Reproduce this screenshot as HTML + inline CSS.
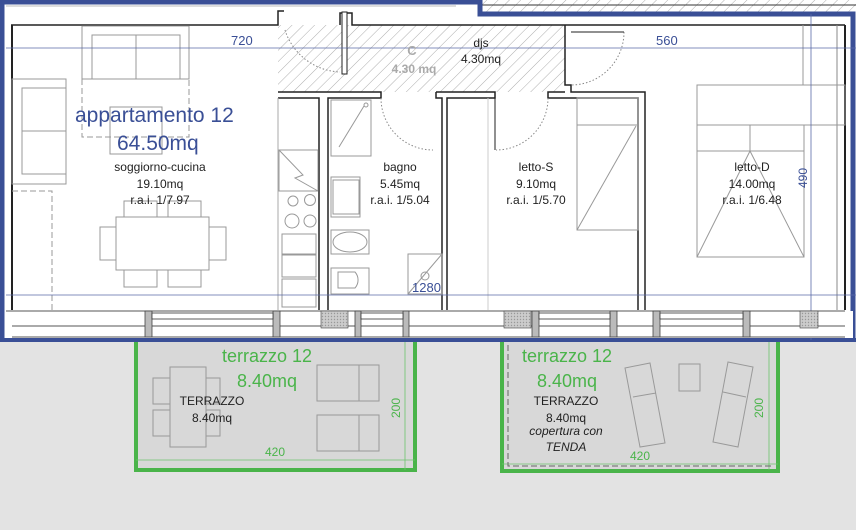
<!DOCTYPE html>
<html><head><meta charset="utf-8"><style>
html,body{margin:0;padding:0;background:#fff}
svg{display:block}
text{font-family:"Liberation Sans",sans-serif}
</style></head><body>
<svg width="856" height="530" viewBox="0 0 856 530" xmlns="http://www.w3.org/2000/svg">
<defs>
<pattern id="h" width="8" height="8" patternUnits="userSpaceOnUse" patternTransform="rotate(45)">
<line x1="0" y1="0" x2="0" y2="8" stroke="#999" stroke-width="0.8"/></pattern>
<pattern id="dots" width="3" height="3" patternUnits="userSpaceOnUse"><rect width="3" height="3" fill="#ccc"/><circle cx="1.5" cy="1.5" r="0.7" fill="#999"/></pattern>
</defs>
<rect width="856" height="530" fill="#fff"/>
<rect x="0" y="342" width="856" height="188" fill="#e3e3e3"/>
<rect x="482" y="0" width="374" height="12" fill="url(#h)"/>
<line x1="482" y1="5" x2="856" y2="5" stroke="#333" stroke-width="1"/>
<rect x="6" y="3" width="472" height="20" fill="#fff"/>
<line x1="6" y1="6" x2="456" y2="6" stroke="#bbb"/>
<rect x="278" y="25" width="287" height="67" fill="url(#h)"/>
<path d="M2 340 V2 H480 V14 H853 V340" fill="none" stroke="#3a4f96" stroke-width="5"/>
<line x1="0" y1="340" x2="856" y2="340" stroke="#3a4f96" stroke-width="4"/>
<path d="M11 25 H278 V11 H284 M340 25 V13 H352 V25 H478" fill="none" stroke="#222" stroke-width="1.5"/>
<path d="M478 25 H845" fill="none" stroke="#222" stroke-width="1.5"/>
<rect x="342" y="12" width="5" height="62" fill="#fff" stroke="#222"/>
<line x1="12" y1="25" x2="12" y2="310" stroke="#222" stroke-width="2"/>
<line x1="845" y1="25" x2="845" y2="310" stroke="#222" stroke-width="2"/>
<line x1="837" y1="25" x2="837" y2="310" stroke="#888" stroke-width="1"/>
<!-- interior walls -->
<path d="M278 92 H381 V98 H328 V310" fill="none" stroke="#222" stroke-width="1.5"/>
<path d="M278 98 H319 V310" fill="none" stroke="#222" stroke-width="1.5"/>
<path d="M436 92 V98 H442 V310 M447 310 V98 H495 V92 H436" fill="none" stroke="#222" stroke-width="1.5"/>
<path d="M565 25 V85 H571 V92 H645 V310 M638 310 V98 H548 V92 H565" fill="none" stroke="#222" stroke-width="1.5"/>
<line x1="278" y1="98" x2="278" y2="310" stroke="#aaa"/>
<path d="M285 30 A60 60 0 0 0 340 72" fill="none" stroke="#888" stroke-dasharray="1.5 2"/>
<path d="M381 98 A52 52 0 0 0 433 150" fill="none" stroke="#888" stroke-dasharray="1.5 2"/>
<path d="M548 98 A52 52 0 0 1 496 150" fill="none" stroke="#888" stroke-dasharray="1.5 2"/>
<path d="M624 32 A53 53 0 0 1 571 85" fill="none" stroke="#888" stroke-dasharray="1.5 2"/>
<line x1="495" y1="98" x2="495" y2="150" stroke="#222"/>
<line x1="571" y1="32" x2="624" y2="32" stroke="#222"/>
<g fill="none" stroke="#999" stroke-width="1">
<rect x="82" y="26" width="107" height="53"/><rect x="92" y="35" width="44" height="44"/><rect x="136" y="35" width="44" height="44"/>
<path d="M82 79 V137 H189 V79" stroke-dasharray="6 3"/>
<rect x="110" y="107" width="52" height="47"/>
<rect x="12" y="79" width="54" height="105"/><rect x="22" y="88" width="44" height="43"/><rect x="22" y="131" width="44" height="43"/>
<path d="M12 191 H52 V310" stroke-dasharray="6 3"/>
<rect x="116" y="217" width="93" height="53"/>
<rect x="124" y="201" width="33" height="16"/><rect x="168" y="201" width="33" height="16"/>
<rect x="124" y="270" width="33" height="17"/><rect x="168" y="270" width="33" height="17"/>
<rect x="100" y="227" width="16" height="33"/><rect x="209" y="227" width="17" height="33"/>
<rect x="279" y="150" width="39" height="41"/><path d="M279 150 L303 175 L295 178 L318 191"/>
<circle cx="293" cy="201" r="5"/><circle cx="310" cy="200" r="5.5"/><circle cx="292" cy="221" r="7"/><circle cx="310" cy="221" r="6"/>
<rect x="282" y="234" width="34" height="20"/><rect x="282" y="255" width="34" height="22"/><rect x="282" y="279" width="34" height="28"/>
<rect x="331" y="100" width="40" height="56"/><path d="M339 147 L364 106"/><circle cx="366" cy="105" r="2"/>
<rect x="331" y="177" width="29" height="40"/><rect x="333" y="180" width="26" height="34"/>
<rect x="331" y="230" width="38" height="24"/><ellipse cx="350" cy="242" rx="17" ry="10"/>
<rect x="331" y="268" width="38" height="26"/><path d="M338 272 H355 A12 12 0 0 1 355 288 H338 Z"/>
<rect x="408" y="254" width="34" height="40"/><path d="M408 294 L442 254"/><circle cx="425" cy="276" r="4"/>
<rect x="577" y="98" width="61" height="132"/><rect x="577" y="125" width="61" height="105"/><path d="M577 230 L636 126"/>
<line x1="488" y1="98" x2="488" y2="310" stroke="#ccc"/>
<rect x="697" y="85" width="148" height="40"/><rect x="697" y="125" width="107" height="132"/>
<line x1="697" y1="151" x2="804" y2="151"/><line x1="750" y1="125" x2="750" y2="151"/>
<path d="M697 257 L750 151 L804 257"/>
<line x1="803" y1="25" x2="803" y2="85"/>
</g>
<g stroke="#5a6aa8" stroke-width="0.8">
<line x1="6" y1="48" x2="856" y2="48"/><line x1="6" y1="295" x2="856" y2="295"/>
<line x1="811" y1="14" x2="811" y2="340"/>
</g>
<rect x="6" y="311" width="847" height="27" fill="#fff"/>
<path d="M6 311 H845 M12 326 H845 M12 337 H845" stroke="#555" stroke-width="1" fill="none"/>
<g fill="#bbb" stroke="#444" stroke-width="0.8">
<rect x="145" y="311" width="7" height="26"/><rect x="273" y="311" width="7" height="26"/>
<rect x="355" y="311" width="6" height="26"/><rect x="403" y="311" width="6" height="26"/>
<rect x="532" y="311" width="7" height="26"/><rect x="610" y="311" width="7" height="26"/>
<rect x="653" y="311" width="7" height="26"/><rect x="743" y="311" width="7" height="26"/>
</g>
<g fill="url(#dots)" stroke="#444" stroke-width="0.6">
<rect x="321" y="311" width="27" height="17"/><rect x="504" y="311" width="27" height="17"/><rect x="800" y="311" width="18" height="17"/>
</g>
<g fill="#fff" stroke="#333" stroke-width="0.8">
<rect x="152" y="313" width="121" height="6"/><rect x="361" y="313" width="42" height="6"/>
<rect x="539" y="313" width="71" height="6"/><rect x="660" y="313" width="83" height="6"/>
</g>
<rect x="136" y="342" width="279" height="129" fill="#d8d8d8"/>
<rect x="501" y="342" width="277" height="130" fill="#d8d8d8"/>
<path d="M136 342 V470 H415 V342" fill="none" stroke="#4ab44a" stroke-width="4"/>
<path d="M502 342 V471 H778 V342" fill="none" stroke="#4ab44a" stroke-width="4"/>
<g stroke="#6cc46c" stroke-width="0.8"><line x1="136" y1="460" x2="415" y2="460"/><line x1="405" y1="342" x2="405" y2="470"/>
<line x1="502" y1="464" x2="778" y2="464"/><line x1="769" y1="342" x2="769" y2="470"/></g>
<path d="M508 345 V466 H774" fill="none" stroke="#666" stroke-dasharray="6 3"/>
<g fill="none" stroke="#999">
<rect x="170" y="367" width="36" height="80"/><rect x="153" y="378" width="17" height="26"/><rect x="153" y="410" width="17" height="26"/>
<rect x="206" y="378" width="14" height="26"/><rect x="206" y="410" width="14" height="26"/>
<rect x="317" y="365" width="62" height="36"/><rect x="317" y="415" width="62" height="36"/>
<line x1="359" y1="365" x2="359" y2="401"/><line x1="359" y1="415" x2="359" y2="451"/>
<rect x="679" y="364" width="21" height="27"/>
<path d="M625 368 L650 363 L665 443 L640 447 Z M633 397 L656 393"/>
<path d="M728 362 L753 367 L738 447 L713 442 Z M723 392 L746 397"/>
</g>
<g fill="#3a4f96" font-size="13">
<text x="231" y="45">720</text><text x="656" y="45">560</text><text x="412" y="292">1280</text>
<text x="807" y="188" transform="rotate(-90 807 188)" font-size="12">490</text>
</g>
<text x="75" y="122" fill="#3a4f96" font-size="21">appartamento 12</text>
<text x="117" y="150" fill="#3a4f96" font-size="21">64.50mq</text>
<text x="412" y="55" fill="#aaa" font-size="13" text-anchor="middle" font-weight="bold">C</text>
<text x="414" y="73" fill="#aaa" font-size="12" text-anchor="middle" font-weight="bold">4.30 mq</text>
<g fill="#222" font-size="12" text-anchor="middle">
<text x="481" y="47">djs</text><text x="481" y="63">4.30mq</text>
<text x="160" y="171">soggiorno-cucina</text><text x="160" y="188">19.10mq</text><text x="160" y="204">r.a.i. 1/7.97</text>
<text x="400" y="171">bagno</text><text x="400" y="188">5.45mq</text><text x="400" y="204">r.a.i. 1/5.04</text>
<text x="536" y="171">letto-S</text><text x="536" y="188">9.10mq</text><text x="536" y="204">r.a.i. 1/5.70</text>
<text x="752" y="171">letto-D</text><text x="752" y="188">14.00mq</text><text x="752" y="204">r.a.i. 1/6.48</text>
<text x="212" y="405">TERRAZZO</text><text x="212" y="422">8.40mq</text>
<text x="566" y="405">TERRAZZO</text><text x="566" y="422">8.40mq</text>
<text x="566" y="435" font-style="italic">copertura con</text><text x="566" y="451" font-style="italic">TENDA</text>
</g>
<g fill="#4ab44a" text-anchor="middle">
<text x="267" y="362" font-size="18">terrazzo 12</text><text x="267" y="387" font-size="18">8.40mq</text>
<text x="567" y="362" font-size="18">terrazzo 12</text><text x="567" y="387" font-size="18">8.40mq</text>
<text x="275" y="456" font-size="12">420</text><text x="640" y="460" font-size="12">420</text>
<text x="400" y="408" font-size="12" transform="rotate(-90 400 408)">200</text>
<text x="763" y="408" font-size="12" transform="rotate(-90 763 408)">200</text>
</g>
</svg>
</body></html>
